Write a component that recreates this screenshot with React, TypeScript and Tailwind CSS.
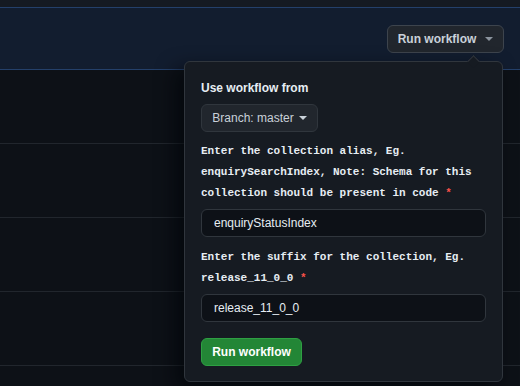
import React from "react";

function Caret({ className }: { className?: string }) {
  return (
    <svg width="8" height="4" viewBox="0 0 8 4" className={className} fill="currentColor">
      <path d="M0 0h8L4 4z" />
    </svg>
  );
}

const rows = [0, 1, 2, 3];

export default function App() {
  return (
    <div className="relative w-[520px] h-[386px] overflow-hidden bg-[#0d1117] font-['Liberation_Sans',Arial,sans-serif] text-[#c9d1d9]">
      {/* top strip */}
      <div className="h-[7px] bg-[#151a22]" />

      {/* highlighted header row */}
      <div className="h-[63px] flex items-center justify-end pr-4 bg-[#121d2f] border-y border-[#24406a]">
        <button className="h-[28px] w-[117px] flex items-center justify-center gap-[9px] rounded-md border border-[#3d444d] bg-[#21262d] text-[12px] font-bold text-[#c9d1d9]">
          Run workflow
          <Caret className="text-[#8b949e]" />
        </button>
      </div>

      {/* list rows */}
      {rows.map((r) => (
        <div key={r} className="h-[74px] border-b border-[#21262d]" />
      ))}

      {/* workflow dispatch popover */}
      <div className="absolute left-[184px] top-[61px] w-[319px] h-[321px] rounded-md border border-[#30363d] bg-[#161b22] px-4 pt-[17px] shadow-[-8px_8px_20px_rgba(1,4,9,0.7)]">
        <div className="absolute -top-[5px] left-[284px] w-[9px] h-[9px] rotate-45 bg-[#161b22] border-l border-t border-[#30363d]" />

        <div className="text-[12px] font-bold leading-[18px] text-[#e6edf3]">Use workflow from</div>

        <button className="mt-[7px] h-[28px] w-[117px] flex items-center justify-center gap-[5px] rounded-md border border-[#30363d] bg-[#21262d] text-[12px] text-[#c9d1d9]">
          Branch: master
          <Caret className="text-[#c9d1d9]" />
        </button>

        <div className="mt-[9px] font-['Liberation_Mono','DejaVu_Sans_Mono',monospace] text-[11px] font-bold leading-[21px] text-[#e6edf3]">
          <span>Enter the collection alias, Eg. enquirySearchIndex, Note: Schema for this collection should be present in code</span>{" "}
          <span className="text-[#f85149]">*</span>
        </div>

        <div className="mt-[5px] h-[28px] flex items-center rounded-md border border-[#30363d] bg-[#0d1117] px-3 text-[12px] text-[#e6edf3]">
          enquiryStatusIndex
        </div>

        <div className="mt-[10px] font-['Liberation_Mono','DejaVu_Sans_Mono',monospace] text-[11px] font-bold leading-[21px] text-[#e6edf3]">
          <span>Enter the suffix for the collection, Eg. release_11_0_0</span>{" "}
          <span className="text-[#f85149]">*</span>
        </div>

        <div className="mt-[5px] h-[28px] flex items-center rounded-md border border-[#30363d] bg-[#0d1117] px-3 text-[12px] text-[#e6edf3]">
          release_11_0_0
        </div>

        <button className="mt-[16px] h-[28px] w-[101px] flex items-center justify-center rounded-md border border-[#2ea043] bg-[#238636] text-[12px] font-bold text-white">
          Run workflow
        </button>
      </div>
    </div>
  );
}
